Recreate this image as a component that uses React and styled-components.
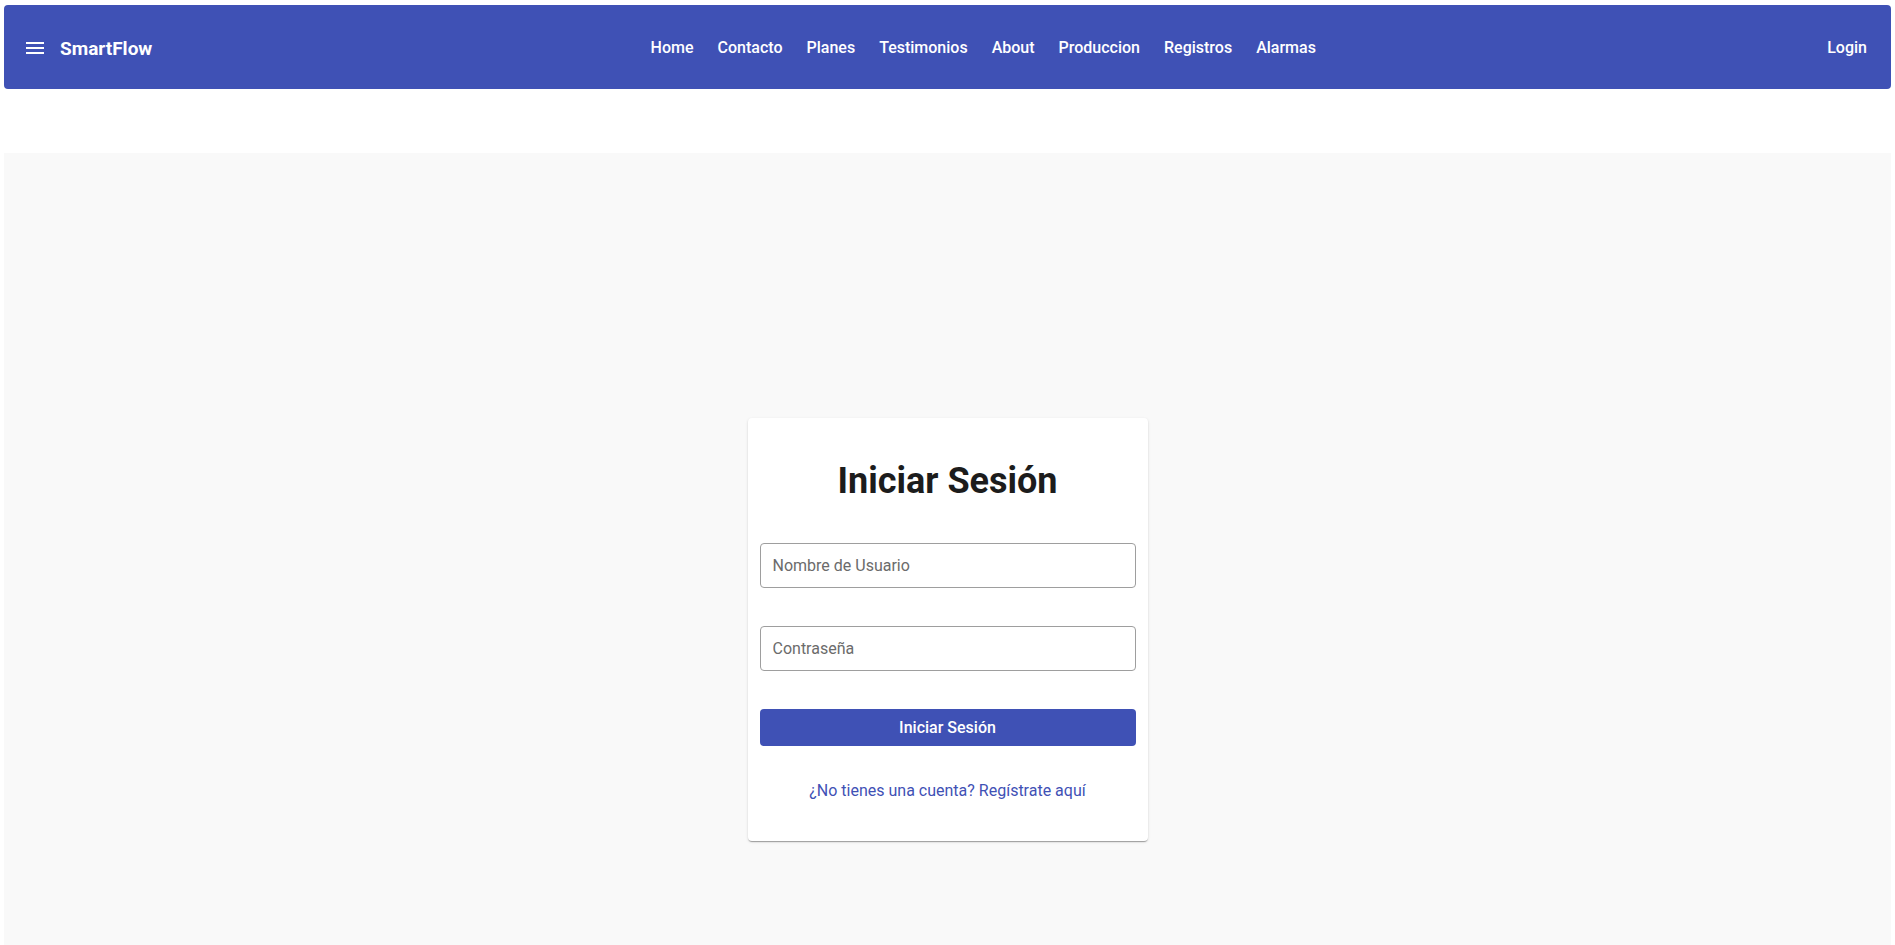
import React from "react";
import styled, { createGlobalStyle } from "styled-components";

const Global = createGlobalStyle`
  html, body { margin: 0; padding: 0; background: #ffffff; }
  body { font-family: Roboto, "Liberation Sans", Arial, sans-serif; }
  * { box-sizing: border-box; }
`;

const Page = styled.div`
  padding: 5px 4px 0 4px;
`;

const AppBar = styled.header`
  height: 84px;
  background: #3f51b5;
  border-radius: 4px;
  color: #fff;
  display: flex;
  align-items: center;
  padding: 2px 16px 0 19px;
`;

const Brand = styled.div`
  display: flex;
  align-items: center;
  gap: 13px;
`;

const MenuButton = styled.button`
  width: 24px;
  height: 24px;
  padding: 0;
  border: 0;
  background: transparent;
  color: #fff;
  display: flex;
  align-items: center;
  justify-content: center;
`;

const Logo = styled.span`
  font-size: 19px;
  font-weight: 700;
`;

const Links = styled.nav`
  flex: 1;
  display: flex;
  justify-content: center;
  gap: 8px;
  padding-right: 5px;
`;

const NavLink = styled.a`
  color: #fff;
  text-decoration: none;
  font-size: 16px;
  font-weight: 500;
  padding: 6px 8px;
  line-height: 1.5;
`;

const Spacer = styled.div`
  height: 64px;
`;

const Main = styled.main`
  background: #f9f9f9;
  min-height: 945px;
  display: flex;
  align-items: center;
  justify-content: center;
  padding-top: 8px;
`;

const Card = styled.form`
  width: 400px;
  background: #fff;
  border-radius: 4px;
  box-shadow: 0px 2px 1px -1px rgba(0,0,0,0.2), 0px 1px 1px 0px rgba(0,0,0,0.14), 0px 1px 3px 0px rgba(0,0,0,0.12);
  padding: 42px 12px 38px;
  display: flex;
  flex-direction: column;
`;

const Title = styled.h1`
  margin: 0 0 40px;
  text-align: center;
  font-size: 36px;
  font-weight: 700;
  color: #1c1c1c;
  line-height: 1.2;
`;

const Input = styled.input`
  height: 45px;
  width: 100%;
  border: 1px solid #9e9e9e;
  border-radius: 4px;
  padding: 0 12px;
  font-family: inherit;
  font-size: 16px;
  color: #222;
  margin-bottom: ${(p) => p.$mb}px;
  outline: none;
  &::placeholder { color: #6b6b6b; }
`;

const Submit = styled.button`
  height: 37px;
  width: 100%;
  background: #3f51b5;
  color: #fff;
  border: 0;
  border-radius: 4px;
  font-family: inherit;
  font-size: 16px;
  font-weight: 500;
  margin-bottom: 33px;
`;

const RegisterLink = styled.a`
  text-align: center;
  color: #3f51b5;
  font-size: 16px;
  text-decoration: none;
  line-height: 1.5;
`;

const links = ["Home", "Contacto", "Planes", "Testimonios", "About", "Produccion", "Registros", "Alarmas"];

export default function App() {
  return (
    <>
      <Global />
      <Page>
        <AppBar>
          <Brand>
            <MenuButton aria-label="menu">
              <svg width="24" height="24" viewBox="0 0 24 24" fill="currentColor">
                <path d="M3 18h18v-2H3v2zm0-5h18v-2H3v2zm0-7v2h18V6H3z" />
              </svg>
            </MenuButton>
            <Logo>SmartFlow</Logo>
          </Brand>
          <Links>
            {links.map((l) => (
              <NavLink key={l} href="#">{l}</NavLink>
            ))}
          </Links>
          <NavLink href="#">Login</NavLink>
        </AppBar>
        <Spacer />
        <Main>
          <Card onSubmit={(e) => e.preventDefault()}>
            <Title>Iniciar Sesión</Title>
            <Input $mb={38} placeholder="Nombre de Usuario" />
            <Input $mb={38} type="password" placeholder="Contraseña" />
            <Submit type="submit">Iniciar Sesión</Submit>
            <RegisterLink href="#">¿No tienes una cuenta? Regístrate aquí</RegisterLink>
          </Card>
        </Main>
      </Page>
    </>
  );
}
